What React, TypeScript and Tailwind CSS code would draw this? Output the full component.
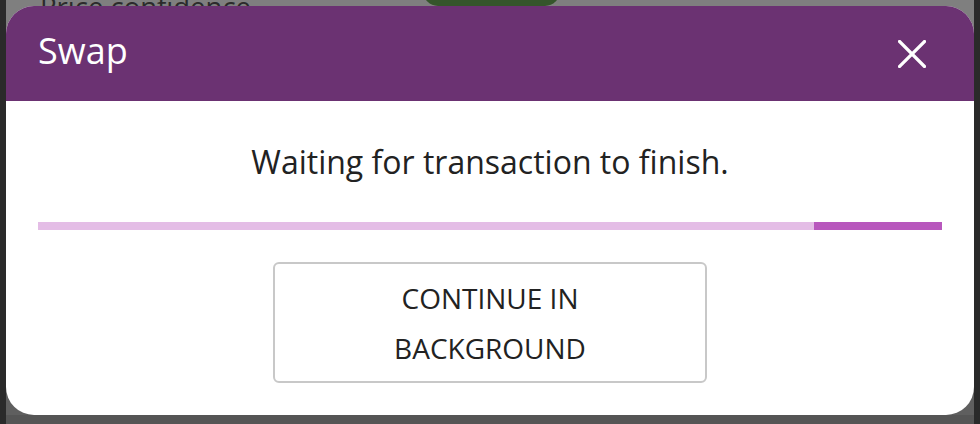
function CloseIcon() {
  return (
    <svg width="28" height="28" viewBox="0 0 28 28" fill="none">
      <path d="M1.5 1.5 L26.5 26.5 M26.5 1.5 L1.5 26.5" stroke="white" strokeWidth="3.2" strokeLinecap="square" />
    </svg>
  );
}

function ProgressBar({ done }: { done: number }) {
  return (
    <div className="flex h-[8px] w-full bg-[#e4bde6]">
      <div className="h-full" style={{ width: `${done * 100}%` }} />
      <div className="h-full flex-1 bg-[#b857bd]" />
    </div>
  );
}

export default function App() {
  return (
    <div
      className="flex h-[424px] w-[980px] overflow-hidden bg-[#7f7f7f]"
      style={{ fontFamily: '"Open Sans", "Noto Sans", sans-serif' }}
    >
      <div className="w-[6px] shrink-0 bg-[#2a2a2a]" />
      <div className="flex flex-1 flex-col bg-[linear-gradient(#7f7f7f_50%,#5f5f5f_50%)]">
        {/* page behind the dialog, mostly hidden */}
        <div className="relative h-[6px] shrink-0 overflow-hidden bg-[#7f7f7f]">
          <div className="-mt-[7px] pl-[34px] text-[27.5px] leading-[27px] text-[#2b2b2b]">
            Price confidence
          </div>
          <div className="absolute left-[417px] top-[-24px] h-[30px] w-[137px] rounded-full bg-[#35552b]" />
        </div>

        <div className="flex h-[409px] shrink-0 flex-col overflow-hidden rounded-[28px] bg-white">
          <div className="flex h-[95px] shrink-0 items-center justify-between bg-[#6b3272] pl-[32px] pr-[48px]">
            <span className="-mt-[6px] text-[36px] leading-none text-white">Swap</span>
            <CloseIcon />
          </div>

          <div className="flex flex-col items-center px-[32px] pt-[37px] pb-[32px]">
            <p className="text-[32px] leading-[48px] text-[#222222]">
              Waiting for transaction to finish.
            </p>
            <div className="mt-[36px] w-full">
              <ProgressBar done={0.858} />
            </div>
            <button className="mt-[32px] flex h-[121px] w-[434px] flex-col items-center justify-center rounded-[6px] border-2 border-[#c8c8c8] text-[28px] leading-[50px] text-[#222222]">
              <span>CONTINUE IN</span>
              <span>BACKGROUND</span>
            </button>
          </div>
        </div>

        <div className="flex-1 bg-[#555555]" />
      </div>
      <div className="w-[6px] shrink-0 bg-[#2a2a2a]" />
    </div>
  );
}
